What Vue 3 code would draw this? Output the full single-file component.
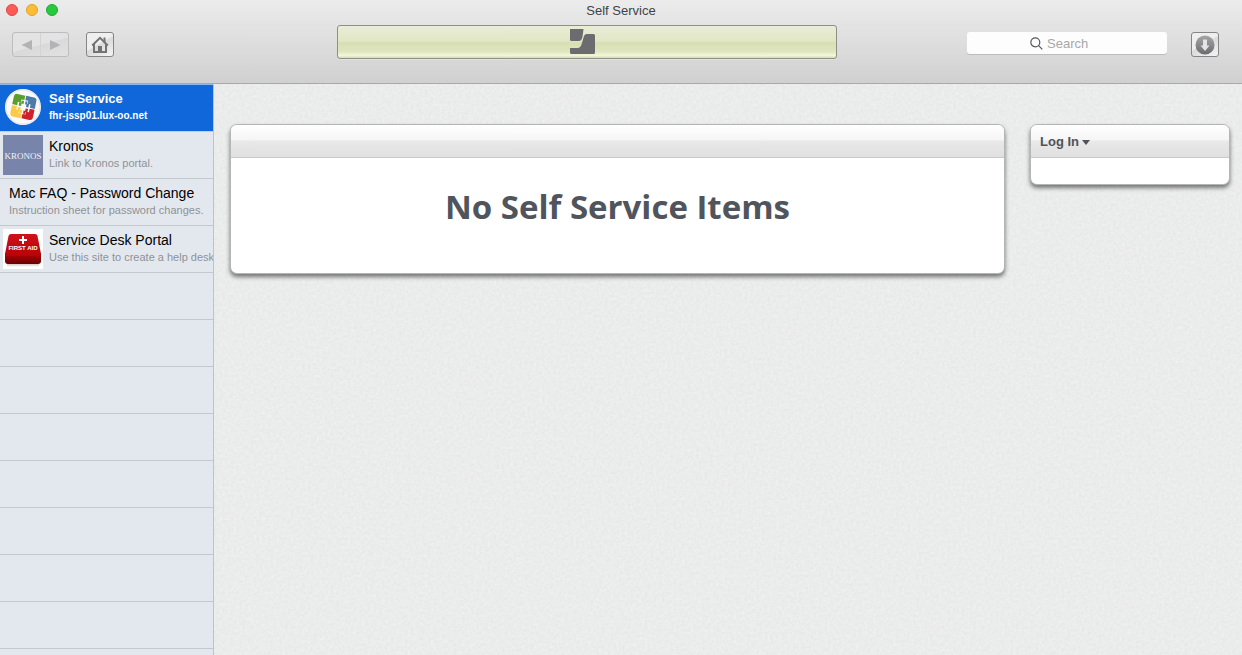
<script setup>
const items = [
  { title: 'Self Service', note: 'fhr-jssp01.lux-oo.net', icon: 'jss', active: true },
  { title: 'Kronos', note: 'Link to Kronos portal.', icon: 'kronos' },
  { title: 'Mac FAQ - Password Change', note: 'Instruction sheet for password changes.' },
  { title: 'Service Desk Portal', note: 'Use this site to create a help desk', icon: 'aid' },
]
const emptyRows = 9
</script>

<template>
  <div class="window">
    <header class="chrome">
      <div class="lights">
        <button class="light red" aria-label="Close"></button>
        <button class="light yellow" aria-label="Minimize"></button>
        <button class="light green" aria-label="Zoom"></button>
      </div>
      <h1 class="title">Self Service</h1>
      <div class="toolbar">
        <div class="nav">
          <button class="nav-button" aria-label="Back" disabled>
            <svg width="12" height="10" viewBox="0 0 12 10"><path d="M0.5 5 11 0v10z" fill="#b3b3b5" /></svg>
          </button>
          <button class="nav-button" aria-label="Forward" disabled>
            <svg width="12" height="10" viewBox="0 0 12 10"><path d="M11.500 5 1 0v10z" fill="#b3b3b5" /></svg>
          </button>
        </div>
        <button class="tool" aria-label="Home">
          <svg width="18" height="18" viewBox="0 0 18 18">
            <path d="M3 8v8h12V8" fill="none" stroke="#737375" stroke-width="2" />
            <path d="M1.200 9.500 9 1.800l7.800 7.700" fill="none" stroke="#737375" stroke-width="2" />
            <path d="M12.500 1.500h2v5l-2-2zM7 10h4v6.500H7z" fill="#737375" />
          </svg>
        </button>
        <span class="space-left"></span>
        <div class="display">
          <svg width="25" height="25" viewBox="0 0 25 25" fill="#6b6b70">
            <path d="M0 0h13.500C13 4 12.800 7 12 9.500 11.200 11.500 10 12 8 12H1.500Q0 12 0 10.500z" />
            <path d="M17 5h6.500Q25 5 25 6.500V23.500Q25 25 23.500 25H1.500Q0 25 0 23.500V19h6c3 0 4.500-.5 5.500-3.500l1.800-6C14 6.500 14.500 5 17 5z" />
          </svg>
        </div>
        <span class="space-right"></span>
        <label class="search">
          <svg width="13" height="13" viewBox="0 0 13 13" fill="none" stroke="#58585a" stroke-width="1.200">
            <circle cx="5.300" cy="5.300" r="4.500" /><path d="m8.600 8.600 3.700 3.700" />
          </svg>
          <input type="search" placeholder="Search" aria-label="Search" />
        </label>
        <button class="tool downloads" aria-label="Downloads">
          <svg width="20" height="20" viewBox="0 0 20 20">
            <defs><linearGradient id="disc" x2="0" y2="1"><stop stop-color="#a6a6a8" /><stop offset="1" stop-color="#6b6b6d" /></linearGradient></defs>
            <circle cx="10" cy="10" r="9.500" fill="url(#disc)" />
            <path d="M8 4.500h4v6h2.500L10 16l-4.500-5.500H8z" fill="#e4e4e6" />
          </svg>
        </button>
      </div>
    </header>

    <div class="body">
      <nav class="sidebar">
        <ul>
          <li v-for="item in items" :key="item.title">
            <button class="row" :class="{ active: item.active }">
              <svg v-if="item.icon === 'jss'" class="icon" width="40" height="40" viewBox="0 0 40 40">
                <circle cx="20" cy="20" r="18" fill="#fbfafa" />
                <circle cx="20" cy="20" r="17" fill="none" stroke="#e5e4e6" />
                <g transform="rotate(12 20.500 19.500)">
                  <path d="M12 8.500h8V13h-3v3h-3v3.500H9v-8q0-3 3-3z" fill="#5b9e30" />
                  <path d="M21 8.500h8q3 0 3 3v8h-5V16h-3v-3h-3z" fill="#4d7ba9" />
                  <path d="M9 20.500h5V24h3v3h3v4.500h-8q-3 0-3-3z" fill="#fcc948" />
                  <path d="M32 20.500v8q0 3-3 3h-8V27h3v-3h3v-3.500z" fill="#d1202c" />
                  <path d="M17.500 14h2.500v3h-2v2.500h-2.500V16h2z" fill="#5b9e30" />
                  <path d="M21.500 14h2v2h2v3.500H23V17h-1.500z" fill="#4d7ba9" />
                  <path d="M15.500 21H18v2.500h2v3h-2.500v-2h-2z" fill="#fcc948" />
                  <path d="M23 21h2.500v3.500h-2v2h-2v-3H23z" fill="#d1202c" />
                </g>
              </svg>
              <svg v-else-if="item.icon === 'kronos'" class="icon" width="40" height="40" viewBox="0 0 40 40">
                <path d="M0 0h40v40H0z" fill="#7984ab" />
                <text x="20" y="24" text-anchor="middle" font-family="Liberation Serif, serif" font-size="9" fill="#f1f2f8">KRONOS</text>
              </svg>
              <svg v-else-if="item.icon === 'aid'" class="icon" width="40" height="40" viewBox="0 0 40 40">
                <defs>
                  <linearGradient id="lid" x2="0" y2="1"><stop stop-color="#cf1219" /><stop offset="1" stop-color="#b70308" /></linearGradient>
                  <linearGradient id="edge" x2="0" y2="1"><stop stop-color="#c00006" /><stop offset="1" stop-color="#650004" /></linearGradient>
                  <linearGradient id="shade" x2="0" y2="1"><stop stop-color="#b8a4a8" /><stop offset="1" stop-color="#fff" /></linearGradient>
                </defs>
                <path d="M0 0h40v40H0z" fill="#fff" />
                <path d="M4 33h32v5H4z" fill="url(#shade)" />
                <path d="M2 24h36v8q0 3-3 3H5q-3 0-3-3z" fill="url(#edge)" />
                <path d="M8 5h24q2 0 2.500 2L38 25q0 2-2 2H4q-2 0-2-2L5.500 7Q6 5 8 5z" fill="url(#lid)" />
                <path d="M19 7h2v3h3v2h-3v3h-2v-3h-3v-2h3z" fill="#fff" />
                <text x="20" y="21" text-anchor="middle" font-family="Liberation Sans, Arial, sans-serif" font-weight="700" font-size="6" fill="#fff">FIRST AID</text>
              </svg>
              <span class="label">
                <span class="name">{{ item.title }}</span>
                <span class="note">{{ item.note }}</span>
              </span>
            </button>
          </li>
          <li v-for="n in emptyRows" :key="n" class="empty"></li>
        </ul>
      </nav>

      <main class="content">
        <svg class="texture" aria-hidden="true">
          <filter id="paper" x="0" y="0" width="100%" height="100%" color-interpolation-filters="sRGB">
            <feTurbulence type="fractalNoise" baseFrequency="0.35" numOctaves="3" seed="4" stitchTiles="stitch" />
            <feColorMatrix values="0.05 0 0 0 0.894  0.05 0 0 0 0.900  0.05 0 0 0 0.897  0 0 0 0 1" />
          </filter>
          <rect width="100%" height="100%" filter="url(#paper)" />
        </svg>
        <section class="panel items">
          <div class="panel-head"></div>
          <h2>No Self Service Items</h2>
        </section>
        <aside class="panel account">
          <div class="panel-head">
            <button class="login">
              Log In
              <svg width="8" height="5" viewBox="0 0 8 5"><path d="M0 0h8L4 5z" fill="#505358" /></svg>
            </button>
          </div>
        </aside>
      </main>
    </div>
  </div>
</template>

<style>
body {
  margin: 0;
}
</style>

<style scoped>
.window {
  display: flex;
  flex-direction: column;
  height: 100vh;
  overflow: hidden;
  font-family: "Liberation Sans", Arial, sans-serif;
  background: #ebecec;
}
button {
  margin: 0;
  padding: 0;
  border: 0;
  background: none;
  font: inherit;
  color: inherit;
}
.chrome {
  position: relative;
  box-sizing: border-box;
  flex: none;
  height: 84px;
  border-bottom: 1px solid #a9a9a9;
  background: linear-gradient(#ececec, #d0d0d0);
}
.lights {
  position: absolute;
  top: 4px;
  left: 6px;
  display: flex;
  gap: 8px;
}
.light {
  box-sizing: border-box;
  width: 12px;
  height: 12px;
  border-radius: 50%;
}
.red {
  background: #fc5b57;
  border: 1px solid #e2463f;
}
.yellow {
  background: #fdbc33;
  border: 1px solid #e0a02e;
}
.green {
  background: #28c840;
  border: 1px solid #20ab2e;
}
.title {
  margin: 0;
  padding-top: 2px;
  font-size: 13px;
  line-height: 17px;
  font-weight: 400;
  text-align: center;
  color: #434343;
}
.toolbar {
  display: flex;
  align-items: flex-start;
  padding: 6px 23px 0 12px;
}
.nav {
  display: flex;
  box-sizing: border-box;
  flex: none;
  width: 57px;
  height: 25px;
  margin-top: 7px;
  border: 1px solid #bdbdbf;
  border-radius: 3px;
  background: linear-gradient(165deg, #e3e3e3 50%, #d9d9d9 52%, #e2e2e2);
}
.nav-button {
  display: flex;
  flex: 1;
  align-items: center;
  justify-content: center;
}
.nav-button + .nav-button {
  border-left: 1px solid #d3d3d3;
}
.tool {
  display: flex;
  box-sizing: border-box;
  flex: none;
  align-items: center;
  justify-content: center;
  width: 28px;
  height: 25px;
  margin: 7px 0 0 17px;
  border: 1px solid #858587;
  border-radius: 3px;
  background: linear-gradient(150deg, #efefef 45%, #dadada 50%, #f5f5f5);
}
.downloads {
  margin-left: 24px;
}
.space-left {
  flex: 223 1 0;
}
.space-right {
  flex: 130 1 0;
}
.display {
  display: flex;
  box-sizing: border-box;
  flex: 0 1 500px;
  align-items: center;
  justify-content: center;
  height: 34px;
  padding-right: 9px;
  padding-bottom: 1px;
  border: 1px solid #8e9088;
  border-radius: 3px;
  background: linear-gradient(#eaedd8, #e0e6c4 48%, #d8deb3 52%, #dfe6bf 80%, #f3f7d9 92%, #d5dbb3);
  box-shadow: 0 1px 0 #e2e2e2;
}
.search {
  display: flex;
  box-sizing: border-box;
  flex: 0 1 200px;
  align-items: center;
  gap: 4px;
  min-width: 0;
  height: 22px;
  margin-top: 7px;
  padding-left: 63px;
  border-radius: 3px;
  background: #fdfdfd;
  box-shadow: 0 1px 0 #bdbdbd;
}
.search svg {
  flex: none;
}
.search input {
  flex: 1;
  min-width: 0;
  padding: 2px 0 0;
  border: 0;
  outline: 0;
  background: none;
  font: 13px/20px "Liberation Sans", Arial, sans-serif;
}
.search input::placeholder {
  color: #a7a7a7;
  opacity: 1;
}
.body {
  display: flex;
  flex: 1;
  min-height: 0;
}
.sidebar {
  flex: none;
  width: 213px;
  overflow: hidden;
  border-right: 1px solid #bfc3c7;
  background: #e3e8ef;
}
ul {
  margin: 0;
  padding: 0;
  list-style: none;
}
.row,
.empty {
  box-sizing: border-box;
  width: 100%;
  height: 47px;
  border-bottom: 1px solid #c4c8ce;
}
.row {
  display: flex;
  align-items: center;
  padding: 0 0 1px 3px;
  overflow: hidden;
  text-align: left;
}
li:first-child {
  padding-bottom: 1px;
  background: #b4d4f0;
}
li:first-child .row {
  border-top: 1px solid #8dbbe9;
  border-bottom: 0;
}
.active {
  padding-bottom: 2px;
  color: #fff;
  background: #0f67da;
}
.icon {
  flex: none;
}
.label {
  padding-left: 6px;
  white-space: nowrap;
}
.name,
.note {
  display: block;
}
.name {
  font-size: 14px;
  line-height: 17px;
}
.note {
  font-size: 11px;
  line-height: 17px;
  color: #8f9296;
}
.active .name {
  font-size: 13px;
  font-weight: 700;
}
.active .note {
  font-size: 10px;
  font-weight: 700;
  color: #fff;
}
.content {
  position: relative;
  display: flex;
  flex: 1;
  align-items: flex-start;
  gap: 25px;
  min-width: 0;
  padding: 40px 12px 0 16px;
}
.texture {
  position: absolute;
  inset: 0;
  width: 100%;
  height: 100%;
}
.panel {
  position: relative;
  box-sizing: border-box;
  overflow: hidden;
  border: 1px solid #b4b5b5;
  border-radius: 7px;
  background: #fff;
  box-shadow: 0 3px 4px rgba(0, 0, 0, 0.5);
}
.items {
  flex: 1;
  padding-bottom: 42px;
}
.account {
  flex: 0 0 200px;
  padding-bottom: 26px;
}
.panel-head {
  box-sizing: border-box;
  height: 33px;
  border-bottom: 1px solid #c9c9c9;
  background: linear-gradient(#fff, #f5f5f5 48%, #e9e9e9 49%, #e0e0e0);
}
h2 {
  margin: 0;
  padding-top: 25px;
  font: 700 33px/48px "Open Sans", "Noto Sans", sans-serif;
  text-align: center;
  color: #50545c;
}
.login {
  display: flex;
  align-items: center;
  gap: 3px;
  padding: 9px 0 0 9px;
  font-size: 13px;
  line-height: 16px;
  font-weight: 700;
  color: #505358;
}
</style>
